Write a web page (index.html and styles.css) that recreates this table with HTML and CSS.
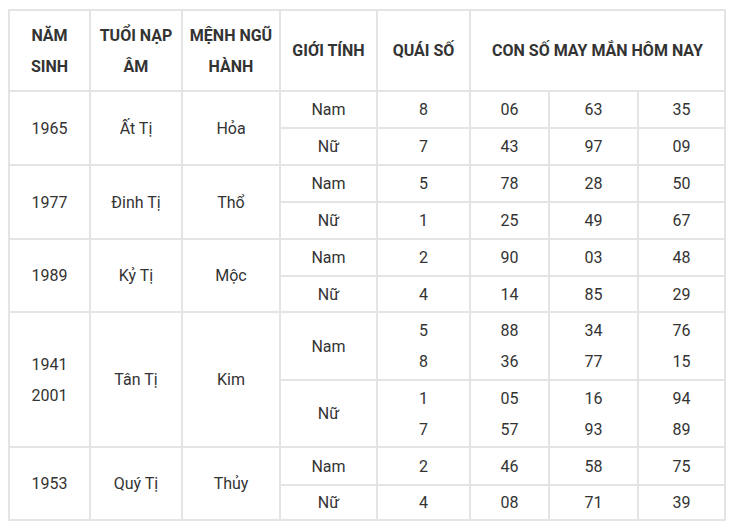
FILE: index.html
```html
<!DOCTYPE html>
<html lang="vi">
<head>
<meta charset="utf-8">
<link rel="stylesheet" href="styles.css">
</head>
<body>
<table class="lucky">
  <colgroup>
    <col class="c1"><col class="c2"><col class="c3"><col class="c4"><col class="c5"><col class="c6"><col class="c7"><col class="c8">
  </colgroup>
  <thead>
    <tr class="head">
      <th>NĂM<br>SINH</th>
      <th>TUỔI NẠP<br>ÂM</th>
      <th>MỆNH NGŨ<br>HÀNH</th>
      <th>GIỚI TÍNH</th>
      <th>QUÁI SỐ</th>
      <th colspan="3">CON SỐ MAY MẮN HÔM NAY</th>
    </tr>
  </thead>
  <tbody>
    <tr class="r1"><td rowspan="2">1965</td><td rowspan="2">Ất Tị</td><td rowspan="2">Hỏa</td><td>Nam</td><td>8</td><td>06</td><td>63</td><td>35</td></tr>
    <tr class="r1"><td>Nữ</td><td>7</td><td>43</td><td>97</td><td>09</td></tr>
    <tr class="r1"><td rowspan="2">1977</td><td rowspan="2">Đinh Tị</td><td rowspan="2">Thổ</td><td>Nam</td><td>5</td><td>78</td><td>28</td><td>50</td></tr>
    <tr class="r1"><td>Nữ</td><td>1</td><td>25</td><td>49</td><td>67</td></tr>
    <tr class="r1"><td rowspan="2">1989</td><td rowspan="2">Kỷ Tị</td><td rowspan="2">Mộc</td><td>Nam</td><td>2</td><td>90</td><td>03</td><td>48</td></tr>
    <tr class="r1 r1b"><td>Nữ</td><td>4</td><td>14</td><td>85</td><td>29</td></tr>
    <tr class="r2"><td rowspan="2">1941<br>2001</td><td rowspan="2">Tân Tị</td><td rowspan="2">Kim</td><td>Nam</td><td>5<br>8</td><td>88<br>36</td><td>34<br>77</td><td>76<br>15</td></tr>
    <tr class="r2b"><td>Nữ</td><td>1<br>7</td><td>05<br>57</td><td>16<br>93</td><td>94<br>89</td></tr>
    <tr class="r3"><td rowspan="2">1953</td><td rowspan="2">Quý Tị</td><td rowspan="2">Thủy</td><td>Nam</td><td>2</td><td>46</td><td>58</td><td>75</td></tr>
    <tr class="r3b"><td>Nữ</td><td>4</td><td>08</td><td>71</td><td>39</td></tr>
  </tbody>
</table>
</body>
</html>
```

FILE: styles.css
```css
html, body {
  background: #ffffff;
}
body {
  margin: 9px 0 0 8px;
  font-family: Roboto, "Liberation Sans", Arial, sans-serif;
  color: #333333;
}
.lucky {
  border-collapse: collapse;
  table-layout: fixed;
  width: 716px;
  font-size: 16px;
}
.c1 { width: 81px; }
.c2 { width: 92px; }
.c3 { width: 98px; }
.c4 { width: 97px; }
.c5 { width: 93px; }
.c6 { width: 79px; }
.c7 { width: 89px; }
.c8 { width: 87px; }
.lucky th,
.lucky td {
  border: 2px solid #e4e4e4;
  padding: 0 4px;
  text-align: center;
  vertical-align: middle;
  line-height: 31px;
}
.lucky th {
  font-weight: 700;
  color: #333333;
}
.head { height: 81px; }
.r1 { height: 37px; }
.r1b { height: 36px; }
.r2 { height: 68px; }
.r2b { height: 67px; }
.r3 { height: 38px; }
.r3b { height: 35px; }
```
